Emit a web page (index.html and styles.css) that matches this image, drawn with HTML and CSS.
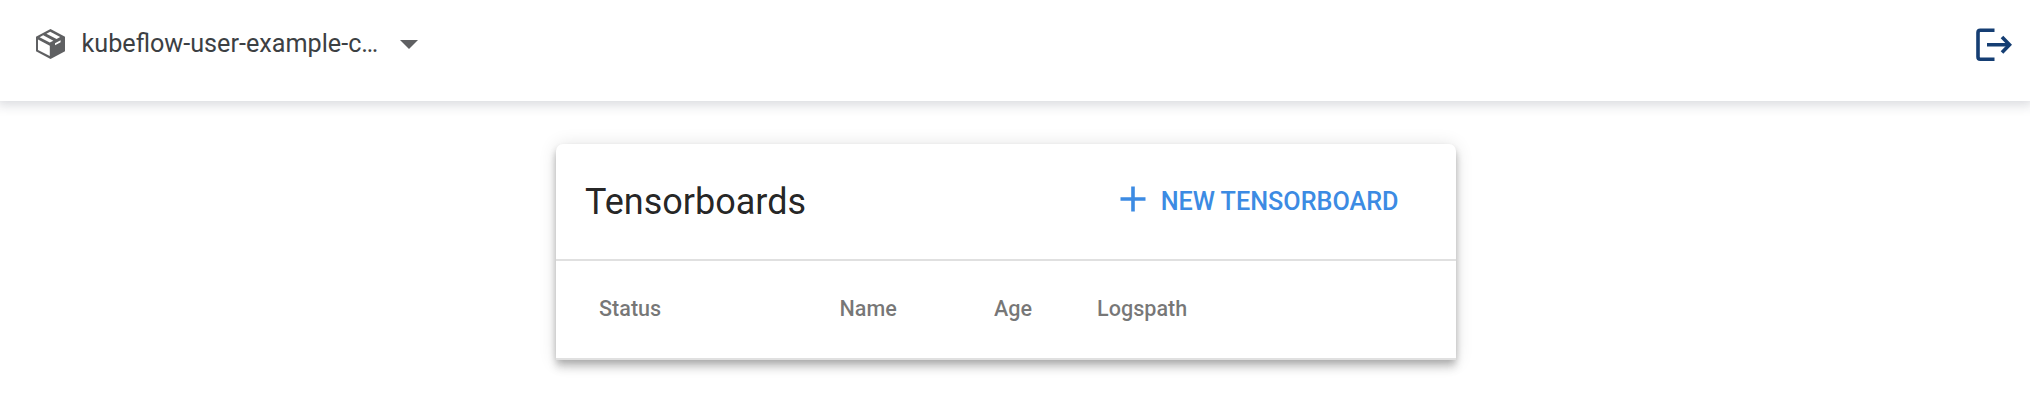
FILE: index.html
```html
<!DOCTYPE html>
<html lang="en">
<head>
<meta charset="utf-8">
<title>Tensorboards</title>
<link rel="stylesheet" href="styles.css">
</head>
<body>
<header class="toolbar">
  <div class="namespace">
    <svg class="package" viewBox="0 0 29 30"><path fill="#5f6062" d="M14.5 0 29 7.7V22.3L14.5 30 0 22.3V7.7Z"/><path fill="#fff" d="M2 10.4 13.8 16.8V27L2 20.9ZM3.6 8.2 7.2 6.3 17.4 11.7 13.8 13.6ZM10.4 4.7 14.2 2.7 24.2 8.1 20.6 10ZM19 14.2 24.6 11.2V13.3L19 16.3Z"/></svg>
    <span class="namespace-name">kubeflow-user-example-c…</span>
    <svg class="caret" viewBox="0 0 18 9"><path fill="#5f6062" d="M0 0H18L9 9Z"/></svg>
  </div>
  <svg class="logout" viewBox="0 0 36 34"><path fill="none" stroke="#153e73" stroke-width="3.6" d="M18.5 2.2H4.2Q2 2.2 2 4.4V29Q2 31.2 4.2 31.2H18.5M11 16.7H34"/><path fill="none" stroke="#153e73" stroke-width="3.6" d="M26 9 33.5 16.7 26 24.4"/></svg>
</header>
<main class="page">
  <section class="card">
    <div class="card-head">
      <h1 class="title">Tensorboards</h1>
      <button class="new-button"><svg class="plus" viewBox="0 0 26 26"><path fill="none" stroke="#3c8be3" stroke-width="3.6" d="M13 .5V25.5M.5 13H25.5"/></svg>NEW TENSORBOARD</button>
    </div>
    <div class="columns">
      <span>Status</span><span>Name</span><span>Age</span><span>Logspath</span>
    </div>
  </section>
</main>
</body>
</html>
```
FILE: styles.css
```css
* { box-sizing: border-box; }
body { margin: 0; height: 406px; overflow: hidden; background: #fff; font-family: Roboto, sans-serif; }
.toolbar { height: 101px; display: flex; align-items: flex-start; justify-content: space-between; padding: 28px 18px 0 36px; background: #fff; box-shadow: 0 1px 11px 3px rgba(32, 33, 60, .17); }
.namespace { display: flex; align-items: center; height: 32px; }
.package { width: 29px; height: 30px; margin-right: 16.5px; }
.namespace-name { width: 318.5px; font-size: 25.2px; line-height: 32px; color: #3c4043; white-space: nowrap; }
.caret { width: 18px; height: 9px; }
.logout { width: 36px; height: 34px; }
.page { padding: 43px 0 0 556px; }
.card { width: 900px; height: 216px; border-radius: 7px 7px 0 0; border-bottom: 2px solid #e0e0e0; background: #fff; box-shadow: 0 3.6px 7.2px -1.8px rgba(0, 0, 0, .2), 0 7.2px 9px 0 rgba(0, 0, 0, .14), 0 1.8px 18px 0 rgba(0, 0, 0, .12); }
.card-head { height: 117px; border-bottom: 2px solid #e0e0e0; display: flex; align-items: center; justify-content: space-between; padding: 0 57.5px 0 29px; }
.title { margin: 0; font-size: 36px; font-weight: 400; line-height: 48px; color: rgba(0, 0, 0, .87); }
.new-button { display: flex; align-items: center; gap: 15px; padding: 0; border: 0; background: none; color: #3c8be3; font: 500 25.2px/40px Roboto, sans-serif; }
.plus { width: 26px; height: 26px; margin-bottom: 5px; }
.columns { height: 95px; display: grid; grid-template-columns: 240.5px 154.5px 103px 1fr; align-items: center; padding-left: 43px; font-size: 21.6px; font-weight: 500; line-height: 30px; color: rgba(0, 0, 0, .54); }
```
